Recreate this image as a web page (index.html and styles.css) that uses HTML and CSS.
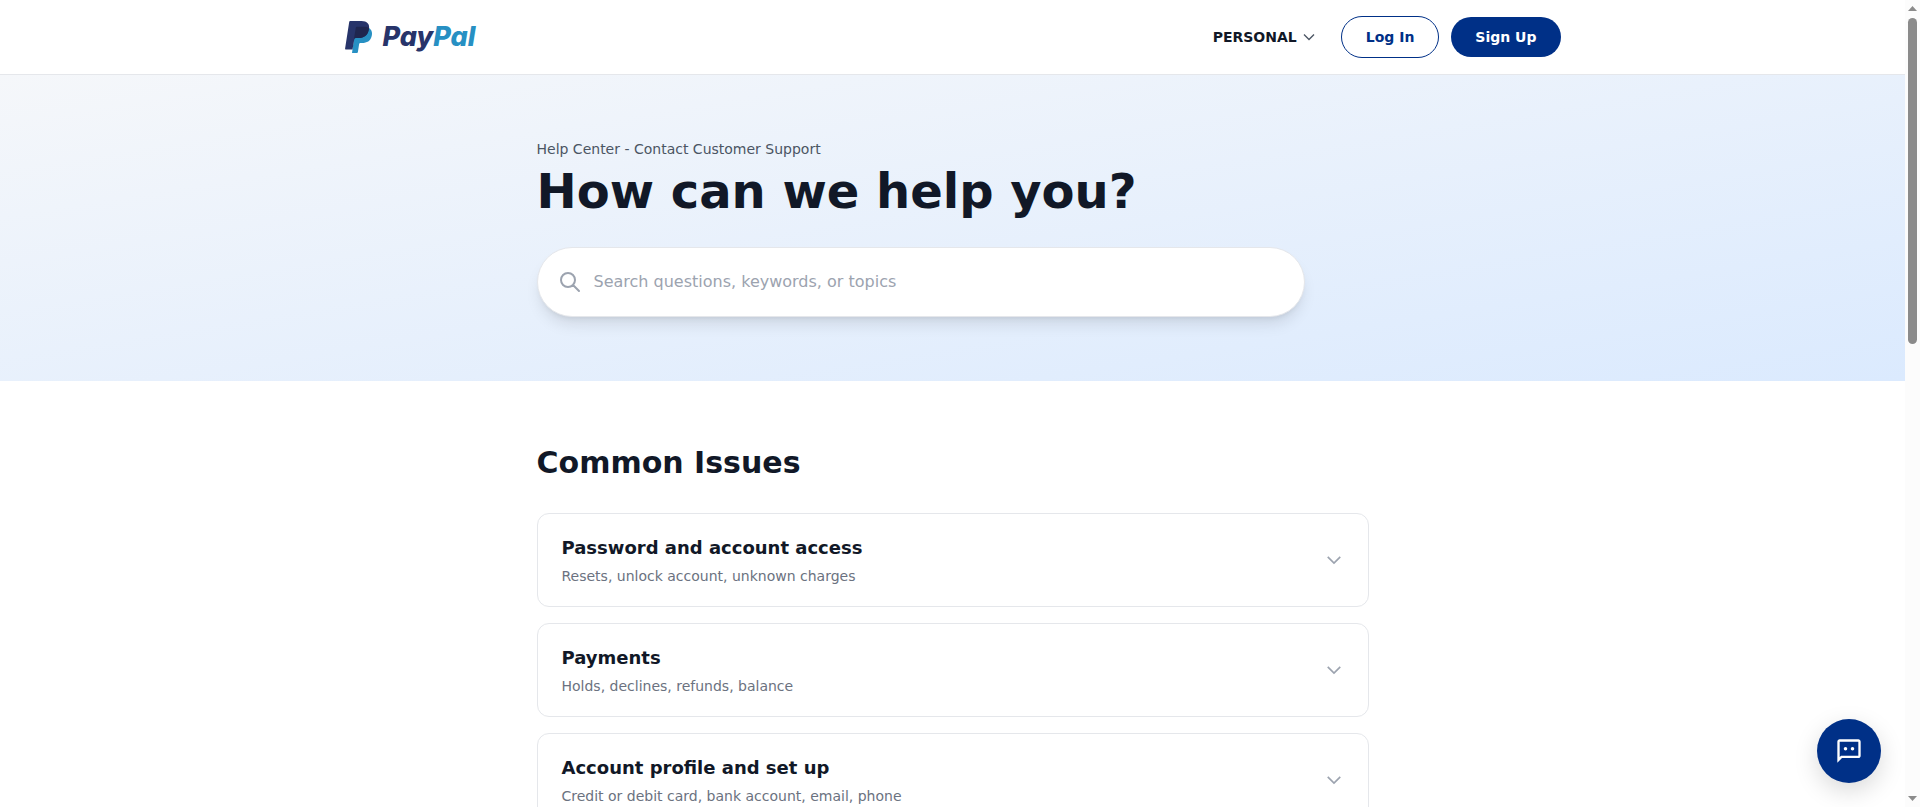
FILE: index.html
```
<!DOCTYPE html>
<html lang="en">
<head>
    <meta charset="UTF-8">
    <meta name="viewport" content="width=device-width, initial-scale=1.0">
    <title>PayPal Help Center</title>
    <link rel="stylesheet" href="styles.css">
</head>
<body>
    <header class="header">
        <nav class="navbar">
            <a href="#" class="logo">
                <svg class="logo-mark" viewBox="0 0 28 34" aria-hidden="true">
                    <path fill="#2790c3" d="M24 8c3 2 3.500 5 2.700 8-1.200 5-4.700 7-9.700 7h-1.500c-.8 0-1.200.5-1.400 1.200l-1.200 7.800c-.1.600-.4 1-1 1H7l3-21z"/>
                    <path fill="#27346a" d="M5.500 1h11c5.500 0 8.500 3 7.500 8-1 6.500-5 9-10.500 9h-2.700c-.9 0-1.300.5-1.500 1.200L7.500 29.500H1c-.7 0-1-.4-.9-1L4.200 2c.1-.6.600-1 1.300-1z"/>
                    <path fill="#1f264f" d="M24 8c-1-.8-3-1.200-5-1.200h-6.500c-1 0-1.600.5-1.800 1.400L8.800 20c.3-1.300.9-2 2-2h2.700C19 18 23.200 15.500 24 8z"/>
                </svg>
                <span class="logo-text">Pay<span class="logo-pal">Pal</span></span>
            </a>
            <div class="nav-actions">
                <button type="button" class="personal-btn">
                    PERSONAL
                    <svg class="chevron-small" viewBox="0 0 24 24" aria-hidden="true"><path d="m19.500 8.250-7.500 7.500-7.500-7.500"/></svg>
                </button>
                <div class="auth-buttons">
                    <a href="#" class="btn login-btn">Log In</a>
                    <a href="#" class="btn signup-btn">Sign Up</a>
                </div>
            </div>
        </nav>
    </header>

    <section class="hero">
        <div class="container">
            <p class="subtitle">Help Center - Contact Customer Support</p>
            <h1>How can we help you?</h1>
            <form class="search-form">
                <svg class="search-icon" viewBox="0 0 24 24" aria-hidden="true"><path d="m21 21-6-6m2-5a7 7 0 1 1-14 0 7 7 0 0 1 14 0z"/></svg>
                <input type="text" aria-label="Search" placeholder="Search questions, keywords, or topics">
            </form>
        </div>
    </section>

    <main class="issues">
        <div class="container">
            <h2>Common Issues</h2>
            <div class="issue-list">
                <button type="button" class="issue-card">
                    <span class="issue-text">
                        <span class="issue-title">Password and account access</span>
                        <span class="issue-info">Resets, unlock account, unknown charges</span>
                    </span>
                    <svg class="chevron" viewBox="0 0 24 24" aria-hidden="true"><path d="m19.500 8.250-7.500 7.500-7.500-7.500"/></svg>
                </button>
                <button type="button" class="issue-card">
                    <span class="issue-text">
                        <span class="issue-title">Payments</span>
                        <span class="issue-info">Holds, declines, refunds, balance</span>
                    </span>
                    <svg class="chevron" viewBox="0 0 24 24" aria-hidden="true"><path d="m19.500 8.250-7.500 7.500-7.500-7.500"/></svg>
                </button>
                <button type="button" class="issue-card">
                    <span class="issue-text">
                        <span class="issue-title">Account profile and set up</span>
                        <span class="issue-info">Credit or debit card, bank account, email, phone</span>
                    </span>
                    <svg class="chevron" viewBox="0 0 24 24" aria-hidden="true"><path d="m19.500 8.250-7.500 7.500-7.500-7.500"/></svg>
                </button>
            </div>
        </div>
    </main>

    <button type="button" class="chat-btn" aria-label="Open chat">
        <svg viewBox="0 0 24 24" aria-hidden="true">
            <path d="M20 2H4c-1.100 0-2 .9-2 2v18l4-4h14c1.100 0 2-.9 2-2V4c0-1.100-.9-2-2-2zm0 14H5.200L4 17.200V4h16v12z"/>
            <circle cx="9" cy="10" r="1.500"/>
            <circle cx="15" cy="10" r="1.500"/>
        </svg>
    </button>

    <div class="scrollbar" aria-hidden="true">
        <svg class="scroll-arrow" viewBox="0 0 9 5"><path d="M0 5h9L4.500 0z"/></svg>
        <div class="scroll-track">
            <div class="scroll-thumb"></div>
        </div>
        <svg class="scroll-arrow" viewBox="0 0 9 5"><path d="M0 0h9L4.500 5z"/></svg>
    </div>
</body>
</html>
```
FILE: styles.css
```
* {
    margin: 0;
    padding: 0;
    box-sizing: border-box;
}

html {
    scrollbar-width: none;
}

body {
    font-family: "DejaVu Sans", sans-serif;
    background-color: #fff;
    color: #111827;
    font-size: 16px;
    line-height: 24px;
    padding-right: 15px;
}

button,
input {
    font-family: inherit;
    border: none;
    background: none;
    color: inherit;
}

button {
    cursor: pointer;
}

a {
    text-decoration: none;
}

.header {
    background-color: #fff;
    border-bottom: 1px solid #e5e7eb;
}

.navbar {
    display: flex;
    justify-content: space-between;
    align-items: center;
    max-width: 1280px;
    margin: 0 auto;
    padding: 16px 32px;
}

.logo {
    display: flex;
    align-items: center;
    gap: 10px;
}

.logo-mark {
    width: 28px;
    height: 34px;
}

.logo-text {
    font-family: Inter, sans-serif;
    font-size: 27px;
    font-weight: 800;
    font-style: italic;
    color: #27346a;
}

.logo-pal {
    color: #2790c3;
}

.nav-actions {
    display: flex;
    align-items: center;
    gap: 24px;
}

.personal-btn {
    display: flex;
    align-items: center;
    gap: 4px;
    font-size: 14px;
    font-weight: bold;
    line-height: 20px;
}

.auth-buttons {
    display: flex;
    align-items: center;
    gap: 12px;
}

.btn {
    padding: 10px 24px;
    border-radius: 32px;
    font-size: 14px;
    font-weight: bold;
    line-height: 20px;
}

.login-btn {
    border: 1px solid #003087;
    color: #003087;
}

.signup-btn {
    background-color: #003087;
    color: #fff;
}

.chevron-small,
.chevron,
.search-icon {
    fill: none;
    stroke: #9ca3af;
    stroke-width: 2;
}

.chevron-small {
    width: 16px;
    height: 16px;
    stroke: #4b5563;
}

.chevron {
    width: 20px;
    height: 20px;
}

.search-icon {
    width: 24px;
    height: 24px;
    stroke-linecap: round;
}

.hero {
    padding: 64px 0;
    background: linear-gradient(to bottom right, #f5f7fa, #dbeafe);
}

.container {
    max-width: 896px;
    margin: 0 auto;
    padding: 0 32px;
}

.subtitle {
    color: #4b5563;
    font-size: 14px;
    line-height: 20px;
    margin-bottom: 8px;
}

h1 {
    font-size: 48px;
    line-height: 48px;
    margin-bottom: 32px;
}

.search-form {
    display: flex;
    align-items: center;
    gap: 12px;
    max-width: 768px;
    padding: 0 20px;
    border: 1px solid #e5e7eb;
    border-radius: 36px;
    background-color: #fff;
    box-shadow: 0 10px 15px -3px rgba(0, 0, 0, 0.1), 0 4px 6px -4px rgba(0, 0, 0, 0.1);
}

.search-form input {
    flex: 1;
    padding: 22px 0;
    font-size: 16px;
    line-height: 24px;
    outline: none;
}

.search-form input::placeholder {
    color: #9ca3af;
}

.issues {
    padding: 64px 0;
}

h2 {
    font-size: 30px;
    line-height: 36px;
    margin-bottom: 32px;
}

.issue-list {
    display: flex;
    flex-direction: column;
    gap: 16px;
}

.issue-card {
    display: flex;
    justify-content: space-between;
    align-items: center;
    padding: 20px 24px;
    border: 1px solid #e5e7eb;
    border-radius: 12px;
    text-align: left;
}

.issue-text {
    display: flex;
    flex-direction: column;
    gap: 4px;
}

.issue-title {
    font-size: 18px;
    font-weight: bold;
    line-height: 28px;
}

.issue-info {
    color: #6b7280;
    font-size: 14px;
    line-height: 20px;
}

/* Floating chat button */
.chat-btn {
    position: fixed;
    right: 39px;
    bottom: 24px;
    display: flex;
    align-items: center;
    justify-content: center;
    width: 64px;
    height: 64px;
    border-radius: 50%;
    background-color: #003087;
    box-shadow: 0 8px 24px rgba(0, 0, 0, 0.15);
}

.chat-btn svg {
    width: 28px;
    height: 28px;
    fill: #fff;
}

/* Page scrollbar */
.scrollbar {
    position: fixed;
    top: 0;
    right: 0;
    bottom: 0;
    display: flex;
    flex-direction: column;
    align-items: center;
    gap: 7px;
    width: 15px;
    padding: 6px 0;
    background-color: #fcfcfc;
}

.scroll-arrow {
    width: 9px;
    height: 5px;
    fill: #8b8b8b;
}

.scroll-track {
    flex: 1;
}

.scroll-thumb {
    width: 9px;
    height: 326px;
    border-radius: 5px;
    background-color: #8b8b8b;
}
```
